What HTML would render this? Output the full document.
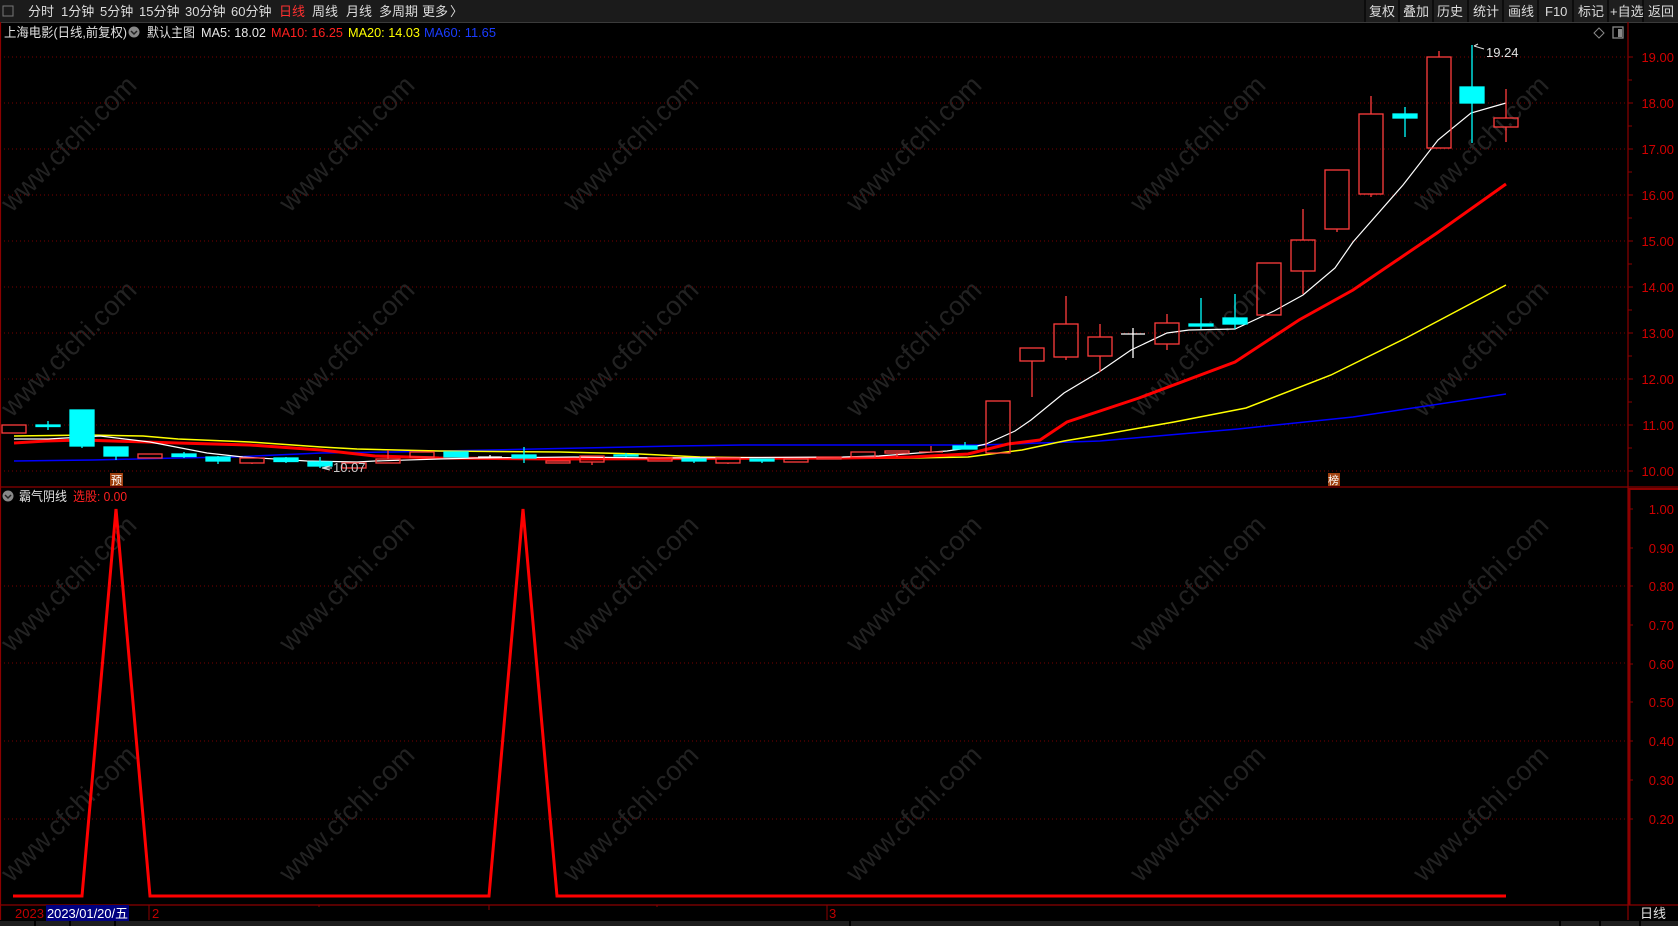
<!DOCTYPE html>
<html><head><meta charset="utf-8"><style>
html,body{margin:0;padding:0;background:#000;width:1678px;height:926px;overflow:hidden}
body{font-family:"Liberation Sans","Noto Sans CJK SC",sans-serif;}
svg{display:block}
</style></head><body>
<svg width="1678" height="926" viewBox="0 0 1678 926" xmlns="http://www.w3.org/2000/svg" font-family="Liberation Sans, Noto Sans CJK SC, sans-serif">
<rect width="1678" height="926" fill="#000"/>
<!-- watermarks -->
<g fill="#222" font-size="27" font-family="Liberation Sans, sans-serif">
<g transform="translate(75,150) rotate(-45)"><text text-anchor="middle">www.cfchi.com</text></g>
<g transform="translate(353,150) rotate(-45)"><text text-anchor="middle">www.cfchi.com</text></g>
<g transform="translate(637,150) rotate(-45)"><text text-anchor="middle">www.cfchi.com</text></g>
<g transform="translate(920,150) rotate(-45)"><text text-anchor="middle">www.cfchi.com</text></g>
<g transform="translate(1204,150) rotate(-45)"><text text-anchor="middle">www.cfchi.com</text></g>
<g transform="translate(1487,150) rotate(-45)"><text text-anchor="middle">www.cfchi.com</text></g>
<g transform="translate(75,355) rotate(-45)"><text text-anchor="middle">www.cfchi.com</text></g>
<g transform="translate(353,355) rotate(-45)"><text text-anchor="middle">www.cfchi.com</text></g>
<g transform="translate(637,355) rotate(-45)"><text text-anchor="middle">www.cfchi.com</text></g>
<g transform="translate(920,355) rotate(-45)"><text text-anchor="middle">www.cfchi.com</text></g>
<g transform="translate(1204,355) rotate(-45)"><text text-anchor="middle">www.cfchi.com</text></g>
<g transform="translate(1487,355) rotate(-45)"><text text-anchor="middle">www.cfchi.com</text></g>
<g transform="translate(75,590) rotate(-45)"><text text-anchor="middle">www.cfchi.com</text></g>
<g transform="translate(353,590) rotate(-45)"><text text-anchor="middle">www.cfchi.com</text></g>
<g transform="translate(637,590) rotate(-45)"><text text-anchor="middle">www.cfchi.com</text></g>
<g transform="translate(920,590) rotate(-45)"><text text-anchor="middle">www.cfchi.com</text></g>
<g transform="translate(1204,590) rotate(-45)"><text text-anchor="middle">www.cfchi.com</text></g>
<g transform="translate(1487,590) rotate(-45)"><text text-anchor="middle">www.cfchi.com</text></g>
<g transform="translate(75,820) rotate(-45)"><text text-anchor="middle">www.cfchi.com</text></g>
<g transform="translate(353,820) rotate(-45)"><text text-anchor="middle">www.cfchi.com</text></g>
<g transform="translate(637,820) rotate(-45)"><text text-anchor="middle">www.cfchi.com</text></g>
<g transform="translate(920,820) rotate(-45)"><text text-anchor="middle">www.cfchi.com</text></g>
<g transform="translate(1204,820) rotate(-45)"><text text-anchor="middle">www.cfchi.com</text></g>
<g transform="translate(1487,820) rotate(-45)"><text text-anchor="middle">www.cfchi.com</text></g>
</g>

<!-- top bar -->
<rect x="0" y="0" width="1678" height="22" fill="#1b1b1b"/>
<line x1="0" y1="22.5" x2="1678" y2="22.5" stroke="#3a3a3a"/>
<rect x="3" y="6" width="10" height="10" fill="none" stroke="#777"/>
<g font-size="13" fill="#dcdcdc">
<text x="28" y="16">分时</text><text x="61" y="16">1分钟</text><text x="100" y="16">5分钟</text><text x="139" y="16">15分钟</text><text x="185" y="16">30分钟</text><text x="231" y="16">60分钟</text>
<text x="279" y="16" fill="#ff3030">日线</text><text x="312" y="16">周线</text><text x="346" y="16">月线</text><text x="379" y="16">多周期</text><text x="422" y="16">更多</text><text x="450" y="16">〉</text>
</g>
<g font-size="13" fill="#dcdcdc">
<rect x="1365" y="0" width="313" height="22" fill="#1e1e1e"/>
<g stroke="#0c0c0c" stroke-width="2"><line x1="1365" y1="0" x2="1365" y2="22"/><line x1="1399" y1="0" x2="1399" y2="22"/><line x1="1433" y1="0" x2="1433" y2="22"/><line x1="1468" y1="0" x2="1468" y2="22"/><line x1="1503" y1="0" x2="1503" y2="22"/><line x1="1538" y1="0" x2="1538" y2="22"/><line x1="1573" y1="0" x2="1573" y2="22"/><line x1="1608" y1="0" x2="1608" y2="22"/><line x1="1643" y1="0" x2="1643" y2="22"/></g>
<text x="1369" y="16">复权</text><text x="1403" y="16">叠加</text><text x="1437" y="16">历史</text><text x="1473" y="16">统计</text><text x="1508" y="16">画线</text><text x="1545" y="16">F10</text><text x="1578" y="16">标记</text><text x="1610" y="16">+自选</text><text x="1648" y="16">返回</text>
</g>

<!-- title row -->
<g font-size="13">
<text x="4" y="37" fill="#e0e0e0" textLength="123" lengthAdjust="spacingAndGlyphs">上海电影(日线,前复权)</text>
<circle cx="134" cy="32" r="5.5" fill="#888"/><path d="M131 31 L134 34 L137 31" stroke="#222" stroke-width="1.5" fill="none"/>
<text x="147" y="37" fill="#e0e0e0" textLength="48" lengthAdjust="spacingAndGlyphs">默认主图</text>
<text x="201" y="37" fill="#e8e8e8" textLength="65" lengthAdjust="spacingAndGlyphs">MA5: 18.02</text>
<text x="271" y="37" fill="#ff2020" textLength="72" lengthAdjust="spacingAndGlyphs">MA10: 16.25</text>
<text x="348" y="37" fill="#ffff00" textLength="72" lengthAdjust="spacingAndGlyphs">MA20: 14.03</text>
<text x="424" y="37" fill="#1a3cff" textLength="72" lengthAdjust="spacingAndGlyphs">MA60: 11.65</text>
</g>
<path d="M1599 28 L1604 33 L1599 38 L1594 33 Z" fill="none" stroke="#888"/>
<rect x="1613" y="27" width="10" height="11" fill="none" stroke="#888" stroke-width="1.3"/><rect x="1618" y="29" width="4" height="8" fill="#888"/>

<!-- grid main -->
<g stroke="#7a0000" stroke-dasharray="1,3">
<line x1="0" y1="57" x2="1628" y2="57"/><line x1="0" y1="103" x2="1628" y2="103"/><line x1="0" y1="149" x2="1628" y2="149"/><line x1="0" y1="195" x2="1628" y2="195"/><line x1="0" y1="241" x2="1628" y2="241"/><line x1="0" y1="287" x2="1628" y2="287"/><line x1="0" y1="333" x2="1628" y2="333"/><line x1="0" y1="379" x2="1628" y2="379"/><line x1="0" y1="425" x2="1628" y2="425"/><line x1="0" y1="471" x2="1628" y2="471"/>
<line x1="0" y1="586" x2="1628" y2="586"/><line x1="0" y1="663" x2="1628" y2="663"/><line x1="0" y1="741" x2="1628" y2="741"/><line x1="0" y1="819" x2="1628" y2="819"/>
</g>
<!-- frame -->
<g stroke="#8b0000" stroke-width="1.2">
<line x1="0" y1="487" x2="1678" y2="487"/>
<line x1="0" y1="905" x2="1678" y2="905"/>
<line x1="1628" y1="22" x2="1628" y2="920"/>
<line x1="0.5" y1="22" x2="0.5" y2="920"/>
</g>
<line x1="1629.5" y1="489" x2="1629.5" y2="905" stroke="#8b0000" stroke-width="2"/>
<line x1="1628" y1="489" x2="1678" y2="489" stroke="#8b0000" stroke-width="2"/>
<!-- axis ticks & labels -->
<g stroke="#8b0000">
<line x1="1628" y1="57" x2="1633" y2="57"/><line x1="1628" y1="80" x2="1632" y2="80"/><line x1="1628" y1="103" x2="1633" y2="103"/><line x1="1628" y1="126" x2="1632" y2="126"/><line x1="1628" y1="149" x2="1633" y2="149"/><line x1="1628" y1="172" x2="1632" y2="172"/><line x1="1628" y1="195" x2="1633" y2="195"/><line x1="1628" y1="218" x2="1632" y2="218"/><line x1="1628" y1="241" x2="1633" y2="241"/><line x1="1628" y1="264" x2="1632" y2="264"/><line x1="1628" y1="287" x2="1633" y2="287"/><line x1="1628" y1="310" x2="1632" y2="310"/><line x1="1628" y1="333" x2="1633" y2="333"/><line x1="1628" y1="356" x2="1632" y2="356"/><line x1="1628" y1="379" x2="1633" y2="379"/><line x1="1628" y1="402" x2="1632" y2="402"/><line x1="1628" y1="425" x2="1633" y2="425"/><line x1="1628" y1="448" x2="1632" y2="448"/><line x1="1628" y1="471" x2="1633" y2="471"/>
<line x1="1628" y1="509" x2="1633" y2="509"/><line x1="1628" y1="548" x2="1633" y2="548"/><line x1="1628" y1="586" x2="1633" y2="586"/><line x1="1628" y1="625" x2="1633" y2="625"/><line x1="1628" y1="664" x2="1633" y2="664"/><line x1="1628" y1="702" x2="1633" y2="702"/><line x1="1628" y1="741" x2="1633" y2="741"/><line x1="1628" y1="780" x2="1633" y2="780"/><line x1="1628" y1="819" x2="1633" y2="819"/>
</g>
<g font-size="13" fill="#d00000" text-anchor="end">
<text x="1674" y="62">19.00</text><text x="1674" y="108">18.00</text><text x="1674" y="154">17.00</text><text x="1674" y="200">16.00</text><text x="1674" y="246">15.00</text><text x="1674" y="292">14.00</text><text x="1674" y="338">13.00</text><text x="1674" y="384">12.00</text><text x="1674" y="430">11.00</text><text x="1674" y="476">10.00</text>
<text x="1674" y="514">1.00</text><text x="1674" y="553">0.90</text><text x="1674" y="591">0.80</text><text x="1674" y="630">0.70</text><text x="1674" y="669">0.60</text><text x="1674" y="707">0.50</text><text x="1674" y="746">0.40</text><text x="1674" y="785">0.30</text><text x="1674" y="824">0.20</text>
</g>

<!-- MA lines -->
<polyline fill="none" stroke="#0000ff" stroke-width="1.5" points="14,461 93,460 178,458 232,457 321,453 393,452 536,449 676,446 743,445 983,445 1040,443 1100,441 1238,429 1353,417 1506,394"/>
<polyline fill="none" stroke="#ffff00" stroke-width="1.5" points="14,436 89,435 143,436 178,439 250,442 321,447 357,449 439,451 560,452 640,454 700,457 790,458 911,458 968,457 1022,450 1064,441 1100,435 1174,422 1246,408 1331,375 1406,338 1506,285"/>
<polyline fill="none" stroke="#ff0000" stroke-width="3" points="14,443 46,441 82,440 178,443 250,445 321,450 375,456 439,458 560,459 843,458 911,457 968,454 1008,444 1040,440 1067,422 1139,398 1235,362 1299,320 1353,290 1437,233 1506,184"/>
<polyline fill="none" stroke="#ffffff" stroke-width="1.2" points="14,439 48,439 100,436 150,442 207,453 243,457 307,461 357,462 375,461 439,459 475,458 574,457 658,458 843,457 879,456 918,453 947,451 968,448 986,444 1015,431 1031,420 1064,393 1099,372 1131,350 1167,333 1189,330 1235,329 1274,311 1303,295 1335,268 1353,242 1403,185 1438,140 1471,113 1506,103"/>

<!-- candles -->
<g stroke="#ff3c3c" stroke-width="1.3" fill="none">
<rect x="2" y="425" width="24" height="8"/>
<rect x="138" y="454" width="24" height="4"/>
<rect x="240" y="458" width="24" height="5"/><line x1="252" y1="463" x2="252" y2="464"/>
<rect x="342" y="463" width="24" height="5"/>
<rect x="376" y="459" width="24" height="4"/><line x1="388" y1="450" x2="388" y2="459"/>
<rect x="410" y="452" width="24" height="5"/>
<rect x="546" y="461" width="24" height="2"/>
<rect x="580" y="456" width="24" height="6"/><line x1="592" y1="462" x2="592" y2="465"/>
<rect x="648" y="458" width="24" height="3"/>
<rect x="716" y="458" width="24" height="5"/><line x1="728" y1="463" x2="728" y2="464"/>
<rect x="784" y="459" width="24" height="3"/>
<rect x="817" y="457" width="24" height="2"/>
<rect x="851" y="452" width="24" height="5"/>
<rect x="885" y="451" width="24" height="2"/><line x1="897" y1="453" x2="897" y2="457"/>
<line x1="919" y1="452" x2="943" y2="452"/><line x1="931" y1="446" x2="931" y2="452"/>
<rect x="986" y="401" width="24" height="52"/>
<rect x="1020" y="348" width="24" height="13"/><line x1="1032" y1="361" x2="1032" y2="397"/>
<rect x="1054" y="324" width="24" height="33"/><line x1="1066" y1="296" x2="1066" y2="324"/><line x1="1066" y1="357" x2="1066" y2="360"/>
<rect x="1088" y="337" width="24" height="19"/><line x1="1100" y1="324" x2="1100" y2="337"/><line x1="1100" y1="356" x2="1100" y2="372"/>
<rect x="1155" y="323" width="24" height="21"/><line x1="1167" y1="314" x2="1167" y2="323"/><line x1="1167" y1="344" x2="1167" y2="350"/>
<rect x="1257" y="263" width="24" height="52"/>
<rect x="1291" y="240" width="24" height="31"/><line x1="1303" y1="209" x2="1303" y2="240"/><line x1="1303" y1="271" x2="1303" y2="294"/>
<rect x="1325" y="170" width="24" height="59"/><line x1="1337" y1="229" x2="1337" y2="232"/>
<rect x="1359" y="114" width="24" height="80"/><line x1="1371" y1="96" x2="1371" y2="114"/><line x1="1371" y1="194" x2="1371" y2="197"/>
<rect x="1427" y="57" width="24" height="91"/><line x1="1439" y1="51" x2="1439" y2="57"/>
<rect x="1494" y="118" width="24" height="9"/><line x1="1506" y1="89" x2="1506" y2="118"/><line x1="1506" y1="127" x2="1506" y2="142"/>
</g>
<g fill="#00ffff" stroke="#00ffff" stroke-width="1.3">
<rect x="36" y="425" width="24" height="1.5"/><line x1="48" y1="421" x2="48" y2="430"/>
<rect x="70" y="410" width="24" height="36"/><line x1="82" y1="446" x2="82" y2="448"/>
<rect x="104" y="447" width="24" height="9"/><line x1="116" y1="456" x2="116" y2="460"/>
<rect x="172" y="454" width="24" height="2.5"/><line x1="184" y1="452" x2="184" y2="458"/>
<rect x="206" y="457" width="24" height="4"/><line x1="218" y1="456" x2="218" y2="464"/>
<rect x="274" y="458" width="24" height="3.5"/><line x1="286" y1="457" x2="286" y2="463"/>
<rect x="308" y="462" width="24" height="4"/><line x1="320" y1="457" x2="320" y2="468"/>
<rect x="444" y="452" width="24" height="5"/>
<rect x="512" y="455" width="24" height="3"/><line x1="524" y1="447" x2="524" y2="463"/>
<rect x="614" y="455" width="24" height="1"/><line x1="626" y1="453" x2="626" y2="457"/>
<rect x="682" y="459" width="24" height="2"/><line x1="694" y1="461" x2="694" y2="463"/>
<rect x="750" y="459" width="24" height="2"/><line x1="762" y1="461" x2="762" y2="463"/>
<rect x="953" y="446" width="24" height="3"/><line x1="965" y1="442" x2="965" y2="446"/>
<rect x="1189" y="324" width="24" height="2"/><line x1="1201" y1="298" x2="1201" y2="329"/>
<rect x="1223" y="318" width="24" height="6"/><line x1="1235" y1="294" x2="1235" y2="329"/>
<rect x="1393" y="114" width="24" height="4"/><line x1="1405" y1="107" x2="1405" y2="137"/>
<rect x="1460" y="87" width="24" height="16"/><line x1="1472" y1="45" x2="1472" y2="143"/>
</g>
<g stroke="#ffffff" stroke-width="1.3">
<line x1="478" y1="457" x2="502" y2="457"/><line x1="490" y1="455" x2="490" y2="458"/>
<line x1="1121" y1="334" x2="1145" y2="334"/><line x1="1133" y1="328" x2="1133" y2="358"/>
</g>
<!-- labels -->
<path d="M1474 46 L1478 44 M1474 46 L1484 49" stroke="#ddd" fill="none"/>
<text x="1486" y="57" font-size="13" fill="#e0e0e0">19.24</text>
<path d="M330 466 L322 468 L330 470 M322 468 L332 468" stroke="#ddd" fill="none"/>
<text x="333" y="472" font-size="13" fill="#c8c8c8">10.07</text>
<rect x="110" y="473" width="13" height="13" fill="#a0400f"/><text x="111" y="484" font-size="11" fill="#fff">预</text>
<rect x="1328" y="473" width="12" height="13" fill="#a0400f"/><text x="1328" y="484" font-size="11" fill="#fff">榜</text>

<!-- lower panel -->
<circle cx="8" cy="496" r="5.5" fill="#888"/><path d="M5 495 L8 498 L11 495" stroke="#222" stroke-width="1.5" fill="none"/>
<text x="19" y="501" font-size="13" fill="#e0e0e0" textLength="48" lengthAdjust="spacingAndGlyphs">霸气阴线</text>
<text x="73" y="501" font-size="13" fill="#ff2020" textLength="54" lengthAdjust="spacingAndGlyphs">选股: 0.00</text>
<polyline fill="none" stroke="#ff0000" stroke-width="3" points="13,896 82,896 116,509 150,896 489,896 523,509 557,896 1506,896"/>

<!-- date bar -->
<g stroke="#8b0000"><line x1="149" y1="905" x2="149" y2="920"/><line x1="827" y1="905" x2="827" y2="920"/><line x1="489" y1="905" x2="489" y2="910"/><line x1="319" y1="905" x2="319" y2="907"/><line x1="657" y1="905" x2="657" y2="907"/></g>
<text x="15" y="918" font-size="13" fill="#c00000">2023</text>
<rect x="46" y="905" width="83" height="16" fill="#000080"/>
<text x="47" y="918" font-size="13" fill="#fff" textLength="81" lengthAdjust="spacingAndGlyphs">2023/01/20/五</text>
<text x="152" y="918" font-size="13" fill="#c00000">2</text>
<text x="829" y="918" font-size="13" fill="#c00000">3</text>
<text x="1640" y="918" font-size="13" fill="#e0e0e0">日线</text>
<rect x="0" y="921" width="1678" height="5" fill="#1e1e1e"/>
<g stroke="#000" stroke-width="2"><line x1="35" y1="921" x2="35" y2="926"/><line x1="70" y1="921" x2="70" y2="926"/><line x1="115" y1="921" x2="115" y2="926"/><line x1="850" y1="921" x2="850" y2="926"/><line x1="1560" y1="921" x2="1560" y2="926"/><line x1="1600" y1="921" x2="1600" y2="926"/><line x1="1640" y1="921" x2="1640" y2="926"/></g>
</svg>
</body></html>
